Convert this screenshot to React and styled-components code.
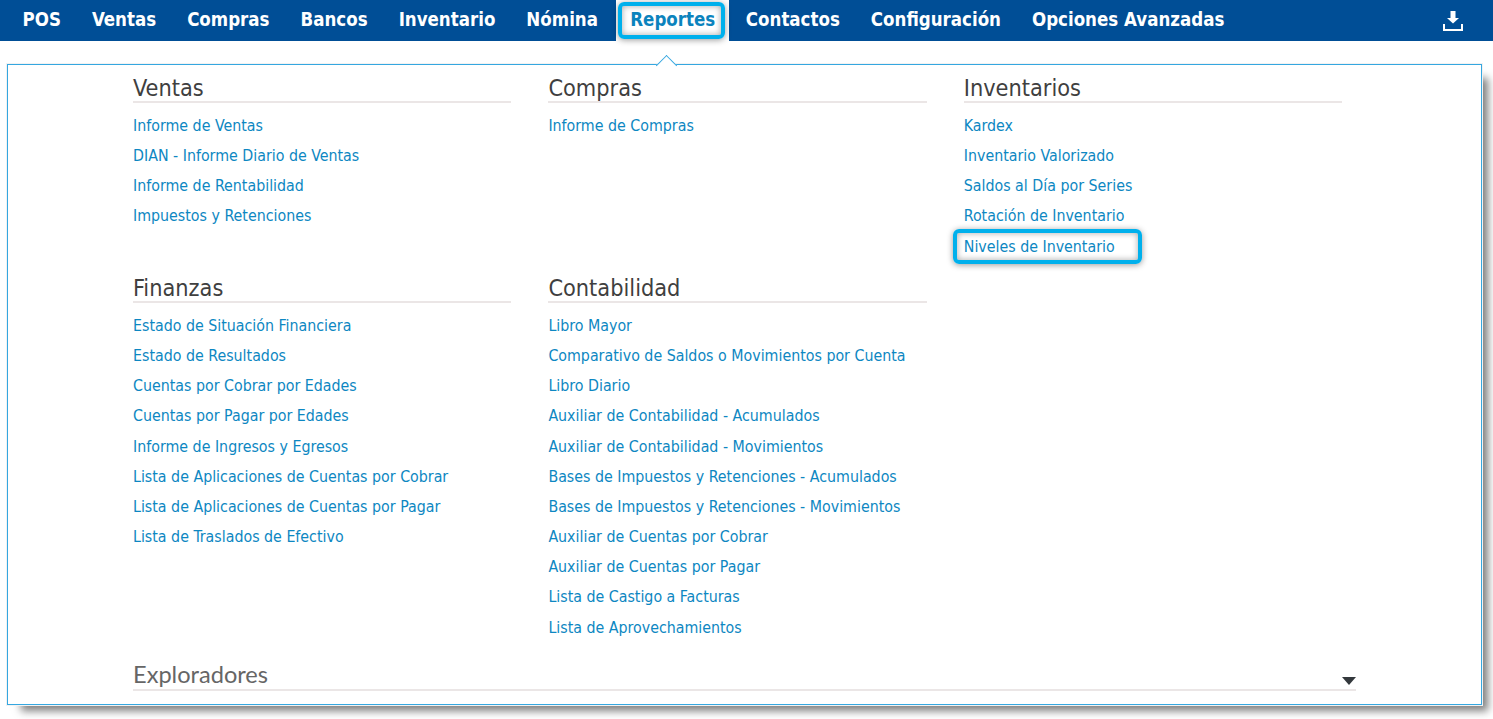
import React from "react";
import styled, { createGlobalStyle } from "styled-components";

const GlobalStyle = createGlobalStyle`
  html, body {
    margin: 0;
    padding: 0;
    background: #fff;
    overflow: hidden;
  }
  body {
    font-family: "DejaVu Sans Condensed", "DejaVu Sans", sans-serif;
  }
`;

const Page = styled.div`
  width: 1493px;
  height: 719px;
  display: flex;
  flex-direction: column;
`;

const NavBar = styled.nav`
  height: 41px;
  flex: none;
  background: #004e96;
  display: flex;
  align-items: stretch;
  padding: 0 30px 0 7px;
`;

const NavItem = styled.a`
  position: relative;
  display: flex;
  align-items: center;
  padding: 0 ${(p) => (p.$active ? "14.2px" : "15.5px")} 3px;
  margin: ${(p) => (p.$active ? "0 0.9px 0 2.6px" : "0")};
  box-sizing: border-box;
  font-size: 18.55px;
  font-weight: 700;
  white-space: nowrap;
  color: ${(p) => (p.$active ? "#0b83bd" : "#fff")};
  background: ${(p) => (p.$active ? "#fff" : "transparent")};
`;

const Highlight = styled.span`
  position: absolute;
  box-sizing: border-box;
  border: 4px solid #00b0ec;
  border-radius: 6px;
  box-shadow: 0 1px 6px rgba(0, 0, 0, 0.4), inset 0 0 6px rgba(0, 0, 0, 0.35);
  pointer-events: none;
  ${(p) => p.$nav && "left: 2px; right: 4px; top: 2px; bottom: 2px;"}
  ${(p) => p.$link && "left: -11px; right: -27px; top: -8px; bottom: -8px;"}
`;

const DownloadButton = styled.span`
  margin-left: auto;
  display: flex;
  align-items: center;
  color: #fff;
`;

const Panel = styled.section`
  position: relative;
  margin: 23px 11px 0 7px;
  height: 641px;
  box-sizing: border-box;
  border: 1px solid #35a7e0;
  background: #fff;
  padding: 7px 124px 0 125px;
  outline: 1px solid #f2f2f2;
  box-shadow: 10px 10px 8px -4px rgba(0, 0, 0, 0.5);
`;

const Pointer = styled.span`
  position: absolute;
  top: -7px;
  left: 651px;
  width: 15px;
  height: 15px;
  box-sizing: border-box;
  background: #fff;
  border-top: 1px solid #35a7e0;
  border-left: 1px solid #35a7e0;
  transform: rotate(45deg);
`;

const Columns = styled.div`
  display: grid;
  grid-template-columns: repeat(3, 378.2px);
  column-gap: 37.2px;
`;

const Group = styled.div`
  height: ${(p) => p.$height}px;
`;

const GroupTitle = styled.h3`
  margin: 0;
  height: 31px;
  box-sizing: border-box;
  border-bottom: 2px solid #ebe6e6;
  font-family: ${(p) => (p.$muted ? '"Lato", "Open Sans", sans-serif' : '"DejaVu Sans Condensed", "DejaVu Sans", sans-serif')};
  font-size: ${(p) => (p.$muted ? "23.6px" : "23.3px")};
  line-height: ${(p) => (p.$muted ? "29px" : "32px")};
  font-weight: 400;
  color: ${(p) => (p.$muted ? "#666" : "#3f3f3f")};
`;

const LinkList = styled.ul`
  list-style: none;
  margin: 7.2px 0 0;
  padding: 0;
`;

const LinkRow = styled.li`
  height: 30.2px;
  display: flex;
  align-items: center;
`;

const LinkText = styled.a`
  position: relative;
  font-size: 15.82px;
  color: #0d87c2;
  white-space: nowrap;
`;

const Explorers = styled.div`
  position: relative;
  width: 1223px;
`;

const Caret = styled.span`
  position: absolute;
  right: 0;
  top: 17px;
  width: 0;
  height: 0;
  border-left: 7px solid transparent;
  border-right: 7px solid transparent;
  border-top: 8px solid #33383c;
`;

const navItems = [
  "POS",
  "Ventas",
  "Compras",
  "Bancos",
  "Inventario",
  "Nómina",
  "Reportes",
  "Contactos",
  "Configuración",
  "Opciones Avanzadas",
];

const groups = [
  {
    title: "Ventas",
    height: 200,
    links: [
      "Informe de Ventas",
      "DIAN - Informe Diario de Ventas",
      "Informe de Rentabilidad",
      "Impuestos y Retenciones",
    ],
  },
  { title: "Compras", height: 200, links: ["Informe de Compras"] },
  {
    title: "Inventarios",
    height: 200,
    links: [
      "Kardex",
      "Inventario Valorizado",
      "Saldos al Día por Series",
      "Rotación de Inventario",
      "Niveles de Inventario",
    ],
  },
  {
    title: "Finanzas",
    height: 388,
    links: [
      "Estado de Situación Financiera",
      "Estado de Resultados",
      "Cuentas por Cobrar por Edades",
      "Cuentas por Pagar por Edades",
      "Informe de Ingresos y Egresos",
      "Lista de Aplicaciones de Cuentas por Cobrar",
      "Lista de Aplicaciones de Cuentas por Pagar",
      "Lista de Traslados de Efectivo",
    ],
  },
  {
    title: "Contabilidad",
    height: 388,
    links: [
      "Libro Mayor",
      "Comparativo de Saldos o Movimientos por Cuenta",
      "Libro Diario",
      "Auxiliar de Contabilidad - Acumulados",
      "Auxiliar de Contabilidad - Movimientos",
      "Bases de Impuestos y Retenciones - Acumulados",
      "Bases de Impuestos y Retenciones - Movimientos",
      "Auxiliar de Cuentas por Cobrar",
      "Auxiliar de Cuentas por Pagar",
      "Lista de Castigo a Facturas",
      "Lista de Aprovechamientos",
    ],
  },
];

const DownloadIcon = () => (
  <svg width="20" height="20" viewBox="0 0 20 20" fill="none">
    <path d="M7.5 0h5v7H16l-6 5.5L4 7h3.5z" fill="currentColor" />
    <path d="M1 13v6h18v-6" stroke="currentColor" strokeWidth="2" />
  </svg>
);

export default function App() {
  return (
    <Page>
      <GlobalStyle />
      <NavBar>
        {navItems.map((item) => (
          <NavItem key={item} $active={item === "Reportes"}>
            {item}
            {item === "Reportes" && <Highlight $nav />}
          </NavItem>
        ))}
        <DownloadButton>
          <DownloadIcon />
        </DownloadButton>
      </NavBar>
      <Panel>
        <Pointer />
        <Columns>
          {groups.map((group) => (
            <Group key={group.title} $height={group.height}>
              <GroupTitle>{group.title}</GroupTitle>
              <LinkList>
                {group.links.map((link) => (
                  <LinkRow key={link}>
                    <LinkText>
                      {link}
                      {link === "Niveles de Inventario" && <Highlight $link />}
                    </LinkText>
                  </LinkRow>
                ))}
              </LinkList>
            </Group>
          ))}
        </Columns>
        <Explorers>
          <GroupTitle $muted>Exploradores</GroupTitle>
          <Caret />
        </Explorers>
      </Panel>
    </Page>
  );
}
